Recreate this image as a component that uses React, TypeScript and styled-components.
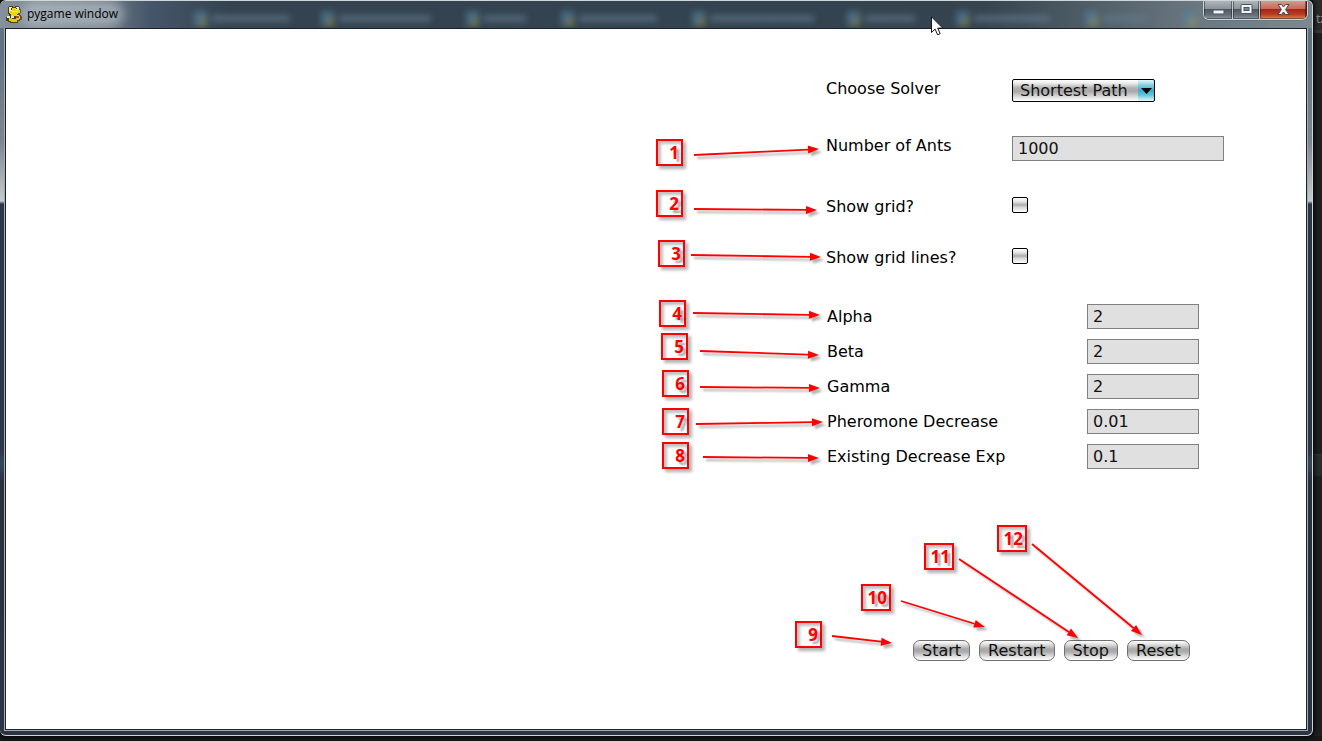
import React from "react";
import styled, { createGlobalStyle } from "styled-components";

const GlobalStyle = createGlobalStyle`
  *, *::before, *::after { box-sizing: border-box; }
  body { margin: 0; background: #191919; }
`;

const Desktop = styled.div`
  display: flex;
  min-height: 100vh;
  padding-bottom: 5px;
  background: #181818;
  overflow: hidden;
  font-family: "DejaVu Sans", sans-serif;
  font-size: 16px;
  line-height: 19px;
  color: #000;
`;

const WindowFrame = styled.div`
  position: relative;
  z-index: 1;
  flex: 1;
  min-width: 0;
  display: flex;
  flex-direction: column;
  border: 1px solid #d0d6d8;
  border-left: 0;
  border-radius: 6px;
  background: linear-gradient(
    180deg,
    #66747f 0,
    #5f7283 50px,
    #727d86 100px,
    #7c868d 140px,
    #c6cacd 200px,
    #2c3845 203px,
    #2c3845 450px,
    #34485c 462px,
    #28333e 480px,
    #2a3443 100%
  );
  box-shadow: 0 0 5px 1px #000;
`;

const TitleBar = styled.header`
  position: relative;
  display: flex;
  align-items: flex-start;
  height: 27px;
  padding: 0 4px 0 6px;
  border-radius: 6px 6px 0 0;
  overflow: hidden;
  background: linear-gradient(
    90deg,
    #84919a 0,
    #707d86 100px,
    #46566a 150px,
    #34434f 230px,
    #33434f 60%,
    #35444f 75%,
    #6d7a82 92%,
    #7c8991 100%
  );
`;

const TitleGroup = styled.div`
  position: relative;
  display: flex;
  align-items: center;
  gap: 5px;
  height: 26px;
`;

const TitleText = styled.h1`
  margin: 0;
  font: 400 12px/16px "Open Sans", "Noto Sans", sans-serif;
  color: #000;
  background: rgba(190, 198, 206, 0.55);
  box-shadow: 0 0 10px 6px rgba(190, 198, 206, 0.55);
  border-radius: 8px;
`;

const GhostTabs = styled.div`
  position: absolute;
  inset: 8px 0 0 194px;
  display: flex;
  align-items: center;
  filter: blur(3px);
  opacity: 0.6;
`;

const GhostTab = styled.div<{ $width: number; $label: number }>`
  flex: none;
  display: flex;
  align-items: center;
  gap: 5px;
  width: ${(p) => p.$width}px;
  &::before {
    content: "";
    width: 13px;
    height: 15px;
    background: linear-gradient(135deg, #5583a8 55%, #9d9d55 65%);
  }
  &::after {
    content: "";
    width: ${(p) => p.$label}px;
    height: 7px;
    background: #667c93;
  }
`;

const Captions = styled.div`
  position: relative;
  display: flex;
  margin: -1px 0 0 auto;
  width: 105px;
  height: 20px;
  border: 1px solid #cbd2d5;
  border-top: 0;
  border-radius: 0 0 6px 6px;
  overflow: hidden;
  box-shadow: 0 0 1px #2d3941;
`;

const CaptionButton = styled.button<{ $share: number; $close?: boolean }>`
  flex: ${(p) => p.$share} 1 0;
  display: flex;
  align-items: center;
  justify-content: center;
  margin: 0;
  padding: 0;
  border: 0;
  border-right: 1px solid ${(p) => (p.$close ? "#4d1a16" : "#c3c9cc")};
  box-shadow: inset 0 0 0 1px rgba(20, 20, 25, 0.45);
  background: ${(p) =>
    p.$close
      ? "linear-gradient(#d9a093 0, #c36c5b 45%, #a52715 50%, #ba3a20 75%, #dc8456 100%)"
      : "linear-gradient(#b4bbbf 0, #8b949a 45%, #4e5a62 50%, #67727a 80%, #8c989e 100%)"};
`;

const Client = styled.main`
  flex: 1;
  display: flex;
  justify-content: flex-end;
  margin: 0 5px 5px;
  border: 1px solid #1b212b;
  box-shadow: 0 0 0 1px #a5adb2;
  background: #fff;
`;

const Panel = styled.form`
  position: relative;
  width: 680px;
  padding: 50px 0 68px 200px;
`;

const Row = styled.div<{ $gap: number }>`
  display: grid;
  grid-template-columns: 186px auto;
  justify-content: start;
  align-items: start;
  margin-bottom: ${(p) => p.$gap}px;
`;

const Parameters = styled.div`
  display: grid;
  grid-template-columns: 260px 112px;
  align-items: center;
  gap: 10px 0;
  padding-left: 1px;
`;

const TextField = styled.input`
  width: 100%;
  min-width: 112px;
  height: 25px;
  padding: 0 5px;
  border: 1px solid #808080;
  border-radius: 0;
  background: #e0e0e0;
  font: inherit;
  color: #111;
`;

const WideField = styled(TextField)`
  width: 212px;
`;

const SelectBox = styled.div`
  display: grid;
  grid-template-columns: 126px 17px;
  align-items: center;
`;

const Select = styled.select`
  grid-area: 1 / 1 / 2 / 3;
  appearance: none;
  height: 23px;
  margin: 0;
  padding: 0 0 0 7px;
  border: 1px solid #000;
  border-radius: 2px;
  background:
    linear-gradient(#e6f8fb 0, #82cfe0 25%, #31b2cf 50%, #62c6db 72%, #e6f8fb 100%) right / 16px 100% no-repeat,
    linear-gradient(#fff 0, #ececec 15%, #b2b2b2 38%, #a8a8a8 55%, #d2d2d2 75%, #fff 100%);
  font: inherit;
  color: #111;
`;

const SelectArrow = styled.svg`
  grid-area: 1 / 2;
  justify-self: center;
  pointer-events: none;
`;

const Checkbox = styled.input`
  appearance: none;
  width: 16px;
  height: 16px;
  margin: 0;
  border: 1px solid #000;
  border-radius: 2px;
  background: linear-gradient(#fff 0, #e6e6e6 25%, #adadad 50%, #d6d6d6 65%, #fff 100%);
`;

const Actions = styled.div`
  display: flex;
  gap: 9px;
  margin: 171px 0 0 87px;
`;

const ActionButton = styled.button`
  height: 21px;
  padding: 0 8px;
  border: 1px solid #707070;
  border-radius: 7px;
  background: linear-gradient(#fff 0, #e0e0e0 18%, #a8a8a8 42%, #acacac 58%, #dedede 80%, #fff 100%);
  font: inherit;
  line-height: 19px;
  color: #111;
`;

const ArrowLayer = styled.svg`
  position: absolute;
  top: 0;
  left: 0;
  pointer-events: none;
  filter: drop-shadow(3px 3px 1px rgba(0, 0, 0, 0.3));
`;

const Badge = styled.span<{ $x: number; $y: number; $wide: boolean }>`
  position: absolute;
  left: ${(p) => p.$x}px;
  top: ${(p) => p.$y}px;
  width: ${(p) => (p.$wide ? 30 : 27)}px;
  height: 27px;
  padding-right: 2px;
  border: 2px solid #f00;
  box-shadow: 3px 3px 3px rgba(0, 0, 0, 0.3), inset 3px 3px 3px rgba(0, 0, 0, 0.25);
  font: 700 17px/23px "Noto Sans", sans-serif;
  text-align: right;
  color: #f00;
  text-shadow: 3px 3px 2px rgba(0, 0, 0, 0.35);
`;

const Pointer = styled.svg`
  position: absolute;
  top: 15px;
  right: 368px;
  pointer-events: none;
`;

const BackgroundStrip = styled.aside`
  flex: none;
  width: 9px;
  background: linear-gradient(
    #2b2b2b 0,
    #2b2b2b 30px,
    #383838 30px,
    #383838 33px,
    #1f1f1f 33px,
    #1f1f1f 454px,
    #333638 454px,
    #292c2e 456px,
    #292c2e 475px,
    #1e1e1e 477px
  );
  overflow: hidden;
  padding: 10px 0 0 3px;
  font: 12px/18px "Noto Sans", sans-serif;
  color: #8c8c8c;
`;

const GHOSTS = [
  [127, 78], [145, 92], [95, 42], [131, 78], [155, 104], [109, 50], [129, 76], [98, 44], [90, 60],
];

const PARAMETERS = [
  { id: "alpha", label: "Alpha", value: "2" },
  { id: "beta", label: "Beta", value: "2" },
  { id: "gamma", label: "Gamma", value: "2" },
  { id: "pheromone", label: "Pheromone Decrease", value: "0.01" },
  { id: "existing", label: "Existing Decrease Exp", value: "0.1" },
];

/* Callouts: badge corner, then arrow start and tip, in panel coordinates. */
const CALLOUTS = [
  { x: 30, y: 110, from: [68, 126], to: [193, 120] },
  { x: 30, y: 161, from: [68, 180], to: [191, 181] },
  { x: 32, y: 211, from: [65, 226], to: [195, 228] },
  { x: 33, y: 271, from: [67, 284], to: [194, 286] },
  { x: 35, y: 304, from: [74, 322], to: [193, 326] },
  { x: 36, y: 341, from: [74, 358], to: [194, 359] },
  { x: 36, y: 379, from: [70, 395], to: [197, 393] },
  { x: 36, y: 413, from: [77, 428], to: [193, 429] },
  { x: 169, y: 592, from: [206, 607], to: [266, 614] },
  { x: 235, y: 555, from: [275, 572], to: [359, 598] },
  { x: 298, y: 514, from: [333, 530], to: [452, 609] },
  { x: 371, y: 496, from: [406, 515], to: [516, 606] },
];

function SnakeIcon() {
  return (
    <svg width="16" height="18" viewBox="0 0 16 18" aria-hidden="true">
      <path
        d="M2 2h1V1h4v1h2V1h4v1h1v2h1v4h-1v2h1v1h1v4h-2v1h-2v2H4v-1H2v-1H0v-4h1v-1h2V9H2z"
        fill="#4a3f10"
      />
      <path d="M3 5h11v3h-2v1H4V8H3zM6 3h4v3H6zM5 9h6v2H5z" fill="#f0d511" />
      <path d="M3 13h3v1h4v-1h3v2h-2v2H5v-1H3zM13 11h1v3h-1z" fill="#e8c80c" />
      <path d="M3 2h3v4H3zM10 2h3v3h-3z" fill="#f1f0dc" />
      <path d="M1 11h3v2H1zM5 11h3v2H5zM11 10h2v1h-2z" fill="#dfe3e4" />
      <path d="M5 3h1v2H5zM10 3h1v1h-1zM4 12h1v1H4zM8 13h1v1H8z" fill="#333" />
      <path d="M10 11h3v2h-3z" fill="#b0402c" />
      <path d="M6 6h6v1H6z" fill="#fff04a" />
    </svg>
  );
}

function Arrow({ from, to }: { from: number[]; to: number[] }) {
  const angle = Math.atan2(to[1] - from[1], to[0] - from[0]);
  const cos = Math.cos(angle);
  const sin = Math.sin(angle);
  const backX = to[0] - 11 * cos;
  const backY = to[1] - 11 * sin;
  const points = [
    to.join(),
    [backX - 4 * sin, backY + 4 * cos].join(),
    [backX + 4 * sin, backY - 4 * cos].join(),
  ].join(" ");
  return (
    <g>
      <line x1={from[0]} y1={from[1]} x2={backX} y2={backY} stroke="#f00" strokeWidth="1.8" />
      <polygon points={points} fill="#f00" />
    </g>
  );
}

export default function App() {
  return (
    <Desktop>
      <GlobalStyle />
      <WindowFrame>
        <TitleBar>
          <GhostTabs aria-hidden="true">
            {GHOSTS.map(([width, label], i) => (
              <GhostTab key={i} $width={width} $label={label} />
            ))}
          </GhostTabs>
          <TitleGroup>
            <SnakeIcon />
            <TitleText>pygame window</TitleText>
          </TitleGroup>
          <Captions>
            <CaptionButton type="button" aria-label="Minimize" $share={29}>
              <svg width="13" height="13" viewBox="0 0 13 13">
                <rect x="1" y="7" width="11" height="4" rx="1" fill="#f4f4f4" stroke="#4b5364" />
              </svg>
            </CaptionButton>
            <CaptionButton type="button" aria-label="Maximize" $share={27}>
              <svg width="13" height="11" viewBox="0 0 13 11">
                <rect x="1" y=".5" width="11" height="9" rx="1" fill="#f4f4f4" stroke="#4b5364" />
                <rect x="4" y="3.5" width="5" height="3" fill="#7b858c" stroke="#4b5364" />
              </svg>
            </CaptionButton>
            <CaptionButton type="button" aria-label="Close" $share={47} $close>
              <svg width="13" height="11" viewBox="0 0 13 11">
                <path
                  d="M1 .5h3.500l2 2.500 2-2.500H12L8.600 5.500 12 10.500H8.500l-2-2.500-2 2.500H1l3.400-5z"
                  fill="#f4f4f4"
                  stroke="#4b4654"
                />
              </svg>
            </CaptionButton>
          </Captions>
        </TitleBar>

        <Client>
          <Panel onSubmit={(e) => e.preventDefault()}>
            <Row $gap={34}>
              <label htmlFor="solver">Choose Solver</label>
              <SelectBox>
                <Select id="solver">
                  <option>Shortest Path</option>
                </Select>
                <SelectArrow width="11" height="6" viewBox="0 0 11 6" aria-hidden="true">
                  <path d="M0 0h11L5.500 6z" fill="#000" />
                </SelectArrow>
              </SelectBox>
            </Row>
            <Row $gap={36}>
              <label htmlFor="ants">Number of Ants</label>
              <WideField id="ants" type="text" defaultValue="1000" />
            </Row>
            <Row $gap={32}>
              <label htmlFor="grid">Show grid?</label>
              <Checkbox id="grid" type="checkbox" />
            </Row>
            <Row $gap={37}>
              <label htmlFor="lines">Show grid lines?</label>
              <Checkbox id="lines" type="checkbox" />
            </Row>
            <Parameters>
              {PARAMETERS.map((p) => (
                <React.Fragment key={p.id}>
                  <label htmlFor={p.id}>{p.label}</label>
                  <TextField id={p.id} type="text" defaultValue={p.value} />
                </React.Fragment>
              ))}
            </Parameters>
            <Actions>
              {["Start", "Restart", "Stop", "Reset"].map((name) => (
                <ActionButton key={name} type="button">
                  {name}
                </ActionButton>
              ))}
            </Actions>

            <ArrowLayer width="680" height="690" viewBox="0 0 680 690" aria-hidden="true">
              {CALLOUTS.map((c, i) => (
                <Arrow key={i} from={c.from} to={c.to} />
              ))}
            </ArrowLayer>
            {CALLOUTS.map((c, i) => (
              <Badge key={i} $x={c.x} $y={c.y} $wide={i > 8}>
                {i + 1}
              </Badge>
            ))}
          </Panel>
        </Client>

        <Pointer width="13" height="20" viewBox="0 0 13 20" aria-hidden="true">
          <path
            d="M.5 .8V16.500l3.600-3.400 2.500 5.700 2.600-1.100-2.500-5.600h5z"
            fill="#fff"
            stroke="#14141e"
          />
        </Pointer>
      </WindowFrame>
      <BackgroundStrip aria-hidden="true">tz</BackgroundStrip>
    </Desktop>
  );
}
